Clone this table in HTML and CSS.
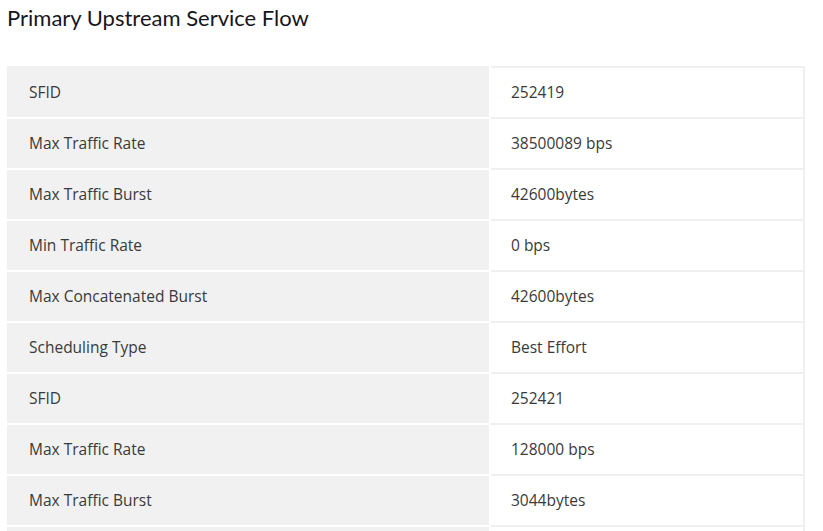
FILE: index.html
```html
<!DOCTYPE html>
<html>
<head>
<meta charset="utf-8">
<link rel="stylesheet" href="styles.css">
</head>
<body>
<h2 class="title">Primary Upstream Service Flow</h2>
<table class="flow">
<tbody>
<tr><td class="label">SFID</td><td class="value">252419</td></tr>
<tr><td class="label">Max Traffic Rate</td><td class="value">38500089 bps</td></tr>
<tr><td class="label">Max Traffic Burst</td><td class="value">42600bytes</td></tr>
<tr><td class="label">Min Traffic Rate</td><td class="value">0 bps</td></tr>
<tr><td class="label">Max Concatenated Burst</td><td class="value">42600bytes</td></tr>
<tr><td class="label">Scheduling Type</td><td class="value">Best Effort</td></tr>
<tr><td class="label">SFID</td><td class="value">252421</td></tr>
<tr><td class="label">Max Traffic Rate</td><td class="value">128000 bps</td></tr>
<tr><td class="label">Max Traffic Burst</td><td class="value">3044bytes</td></tr>
<tr><td class="label">Min Traffic Rate</td><td class="value">0 bps</td></tr>
</tbody>
</table>
</body>
</html>
```
FILE: styles.css
```css
html, body {
  margin: 0;
  padding: 0;
  background: #ffffff;
}
body {
  padding: 0 18px 0 7px;
  font-family: "Open Sans", Lato, sans-serif;
  color: #333333;
}
.title {
  margin: 0;
  padding-top: 4px;
  font-family: Lato, sans-serif;
  font-size: 22px;
  font-weight: 400;
  line-height: 28px;
  color: #16161e;
  height: 62px;
}
.flow {
  width: 798px;
  border-collapse: collapse;
  border: 2px solid #f0f0f0;
}
.flow td {
  height: 51px;
  padding: 0 0 1px 20px;
  font-size: 15.5px;
  vertical-align: middle;
  box-sizing: border-box;
}
.label {
  width: 482px;
  background: #f1f1f1;
  border-right: 2px solid #ffffff;
  border-bottom: 2px solid #ffffff;
  color: #3a3a3a;
}
.value {
  background: #ffffff;
  border-bottom: 2px solid #f0f0f0;
  color: #3a3a3a;
}
```
